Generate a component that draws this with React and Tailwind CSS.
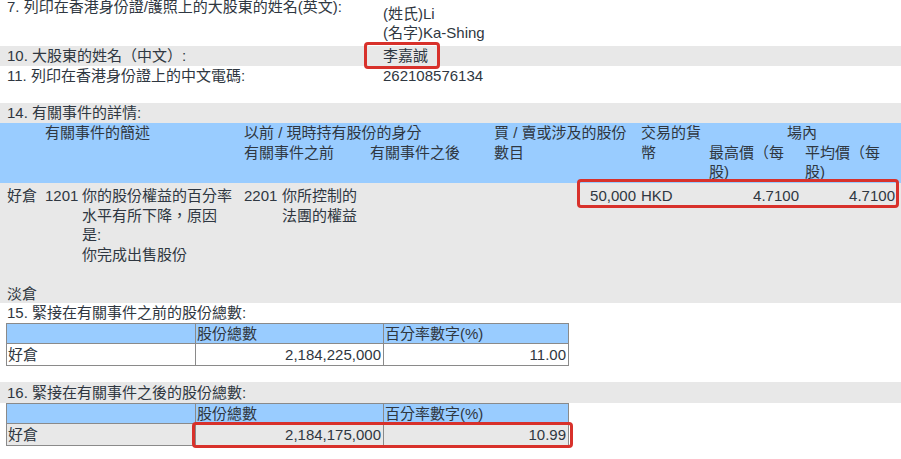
import React from 'react';

const RedBox = ({ className }) => (
  <div className={`absolute border-[3px] border-[#d8312b] rounded-[4px] pointer-events-none ${className}`} />
);

const TotalsTable = ({ shares, percent, gray, highlight }) => (
  <div className="relative ml-[6px] w-[563px] border border-[#8a8a8a]">
    <div className="grid grid-cols-[188px_188px_1fr] h-[20px] leading-[20px] bg-[#99ccff] border-b border-[#8a8a8a]">
      <div />
      <div className="border-l border-[#8a8a8a] pl-px">股份總數</div>
      <div className="border-l border-[#8a8a8a] pl-px">百分率數字(%)</div>
    </div>
    <div
      className={`grid grid-cols-[188px_188px_1fr] h-[21px] leading-[21px] ${
        gray ? 'bg-[#e8e8e8]' : 'bg-white'
      }`}
    >
      <div className="pl-px">好倉</div>
      <div className="border-l border-[#8a8a8a] text-right pr-[2px]">{shares}</div>
      <div className="border-l border-[#8a8a8a] text-right pr-[2px]">{percent}</div>
    </div>
    {highlight && <RedBox className="left-[185px] top-[18px] w-[381px] h-[26px]" />}
  </div>
);

export default function App() {
  return (
    <div className="relative w-[901px] h-[459px] overflow-hidden bg-white text-[15px] text-[#2f3741] font-['Liberation_Sans','Noto_Sans_CJK_TC',sans-serif]">
      {/* 7 */}
      <div className="flex h-[46px] pl-[7px]">
        <div className="w-[376px] -mt-[3px] leading-[20px]">7. 列印在香港身份證/護照上的大股東的姓名(英文):</div>
        <div className="pt-[4px] leading-[19px]">
          <div>(姓氏)Li</div>
          <div>(名字)Ka-Shing</div>
        </div>
      </div>

      {/* 10 */}
      <div className="flex h-[20px] leading-[20px] pl-[7px] bg-[#e8e8e8]">
        <div className="w-[376px]">10. 大股東的姓名（中文）:</div>
        <div className="relative">
          李嘉誠
          <RedBox className="-left-[19px] -top-[4px] w-[76px] h-[27px]" />
        </div>
      </div>

      {/* 11 */}
      <div className="flex h-[20px] leading-[20px] pl-[7px]">
        <div className="w-[376px]">11. 列印在香港身份證上的中文電碼:</div>
        <div>262108576134</div>
      </div>

      <div className="h-[17px]" />

      {/* 14 */}
      <div className="h-[20px] leading-[20px] pl-[7px] bg-[#e8e8e8]">14. 有關事件的詳情:</div>
      <div className="grid grid-cols-[38px_37px_162px_38px_88px_124px_147px_68px_96px_96px] h-[60px] pl-[7px] bg-[#99ccff] leading-[19.5px] overflow-hidden">
        <div />
        <div className="col-span-2">有關事件的簡述</div>
        <div className="col-span-3">
          <div>以前 / 現時持有股份的身分</div>
          <div className="grid grid-cols-[126px_1fr]">
            <div>有關事件之前</div>
            <div>有關事件之後</div>
          </div>
        </div>
        <div>
          買 / 賣或涉及的股份
          <br />
          數目
        </div>
        <div>
          交易的貨
          <br />
          幣
        </div>
        <div className="col-span-2">
          <div className="text-center pr-[6px]">場內</div>
          <div className="grid grid-cols-2">
            <div>
              最高價（每
              <br />
              股)
            </div>
            <div>
              平均價（每
              <br />
              股)
            </div>
          </div>
        </div>
      </div>

      <div className="relative h-[120px] bg-[#e8e8e8] pl-[7px] leading-[19.5px]">
        <div className="grid grid-cols-[38px_37px_162px_38px_88px_124px_147px_68px_96px_96px] pt-[3px]">
          <div>好倉</div>
          <div>1201</div>
          <div>
            你的股份權益的百分率
            <br />
            水平有所下降，原因
            <br />
            是:
            <br />
            你完成出售股份
          </div>
          <div>2201</div>
          <div>
            你所控制的
            <br />
            法團的權益
          </div>
          <div />
          <div className="text-right pr-[5px]">50,000</div>
          <div>HKD</div>
          <div className="text-right pr-[6px]">4.7100</div>
          <div className="text-right pr-[6px]">4.7100</div>
        </div>
        <div className="mt-[20px]">淡倉</div>
        <RedBox className="left-[577px] -top-[4px] w-[322px] h-[29px]" />
      </div>

      {/* 15 */}
      <div className="h-[20px] leading-[20px] pl-[7px]">15. 緊接在有關事件之前的股份總數:</div>
      <TotalsTable shares="2,184,225,000" percent="11.00" />

      <div className="h-[16px]" />

      {/* 16 */}
      <div className="h-[21px] leading-[21px] pl-[7px] bg-[#e8e8e8]">16. 緊接在有關事件之後的股份總數:</div>
      <TotalsTable shares="2,184,175,000" percent="10.99" gray highlight />
    </div>
  );
}
